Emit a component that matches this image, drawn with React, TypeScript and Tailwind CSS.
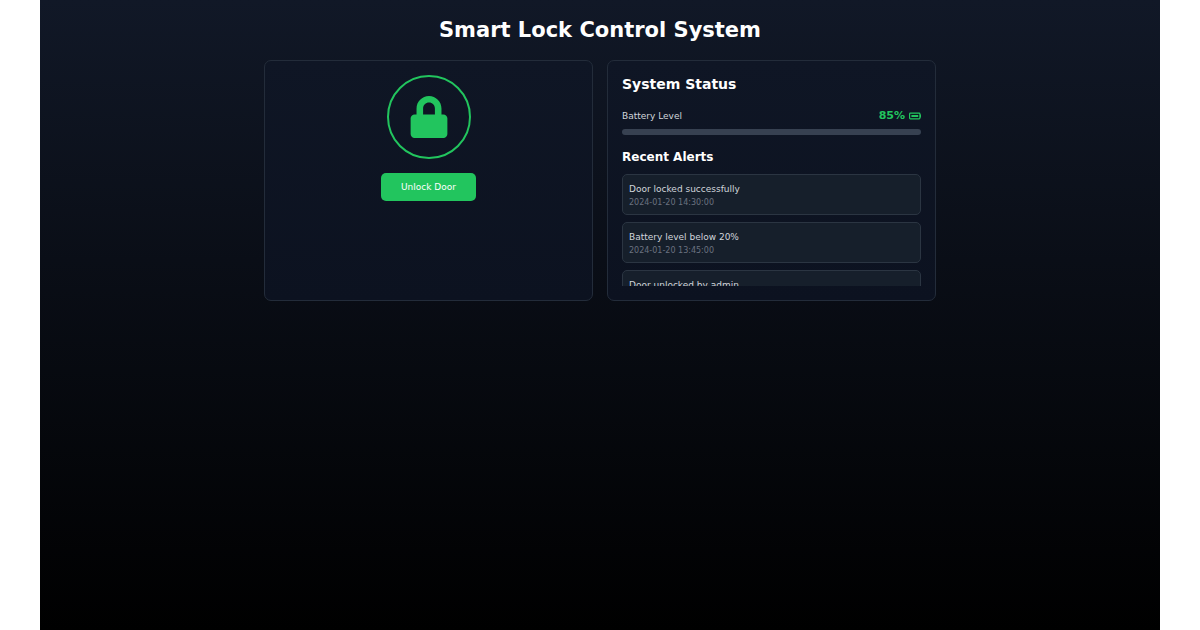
import { FaLock } from 'react-icons/fa';

type Alert = { id: number; message: string; timestamp: string };

const batteryLevel = 85;

const alerts: Alert[] = [
  { id: 1, message: 'Door locked successfully', timestamp: '2024-01-20 14:30:00' },
  { id: 2, message: 'Battery level below 20%', timestamp: '2024-01-20 13:45:00' },
  { id: 3, message: 'Door unlocked by admin', timestamp: '2024-01-20 12:15:00' }
];

function BatteryIcon() {
  return (
    <svg width="12" height="8" viewBox="0 0 12 8" fill="none" aria-hidden="true">
      <rect x="0.6" y="1.1" width="10.3" height="5.8" rx="0.8" stroke="currentColor" strokeWidth="1.2" />
      <rect x="2.4" y="3" width="6.8" height="2" fill="currentColor" />
      <rect x="11" y="2.5" width="1" height="3" fill="currentColor" />
    </svg>
  );
}

function LockPanel() {
  return (
    <section className="flex flex-col items-center rounded-[7px] border border-[#232c3a] bg-linear-to-b/srgb from-[#0f1625] to-[#0c1220] p-3.5">
      <div className="rounded-full border-2 border-[#22c55e] p-[19px] text-[#22c55e]">
        <FaLock size={42} />
      </div>
      <button type="button" className="mt-3.5 rounded-[5px] bg-[#22c55e] px-5 py-1.5 text-[9px] leading-4 text-white hover:bg-[#16a34a]">
        Unlock Door
      </button>
    </section>
  );
}

function StatusPanel() {
  return (
    <section className="rounded-[7px] border border-[#232c3a] bg-linear-to-b/srgb from-[#0f1625] to-[#0c1220] p-3.5">
      <h2 className="text-[14px] leading-[18px] font-bold text-white">System Status</h2>
      <div className="mt-[15px] flex items-center justify-between">
        <span className="text-[9px] leading-4 text-[#d1d5db]">Battery Level</span>
        <span className="flex items-center gap-1 text-[11px] leading-4 font-bold text-[#22c55e]">
          {batteryLevel}%
          <BatteryIcon />
        </span>
      </div>
      <div className="mt-[5px] h-1.5 rounded-full bg-[#374151]" />
      <h3 className="mt-3.5 text-[12px] leading-4 font-bold text-white">Recent Alerts</h3>
      <ul className="mt-[9px] max-h-28 space-y-[7px] overflow-hidden">
        {alerts.map((alert) => (
          <li key={alert.id} className="rounded-[5px] border border-[#2b3542] bg-[#161f2b] px-1.5 py-1.5">
            <p className="text-[9px] leading-4 text-[#d1d5db]">{alert.message}</p>
            <p className="text-[8px] leading-[11px] text-[#6b7280]">{alert.timestamp}</p>
          </li>
        ))}
      </ul>
    </section>
  );
}

export default function App() {
  return (
    <div className="bg-white px-10 font-['DejaVu_Sans',sans-serif]">
      <main className="min-h-screen bg-linear-to-b/srgb from-[#111827] to-black px-4 py-[18px]">
        <div className="mx-auto max-w-[672px]">
          <h1 className="text-center text-[21px] leading-6 font-bold text-white">Smart Lock Control System</h1>
          <div className="mt-[18px] grid grid-cols-1 gap-3.5 sm:grid-cols-2">
            <LockPanel />
            <StatusPanel />
          </div>
        </div>
      </main>
    </div>
  );
}
